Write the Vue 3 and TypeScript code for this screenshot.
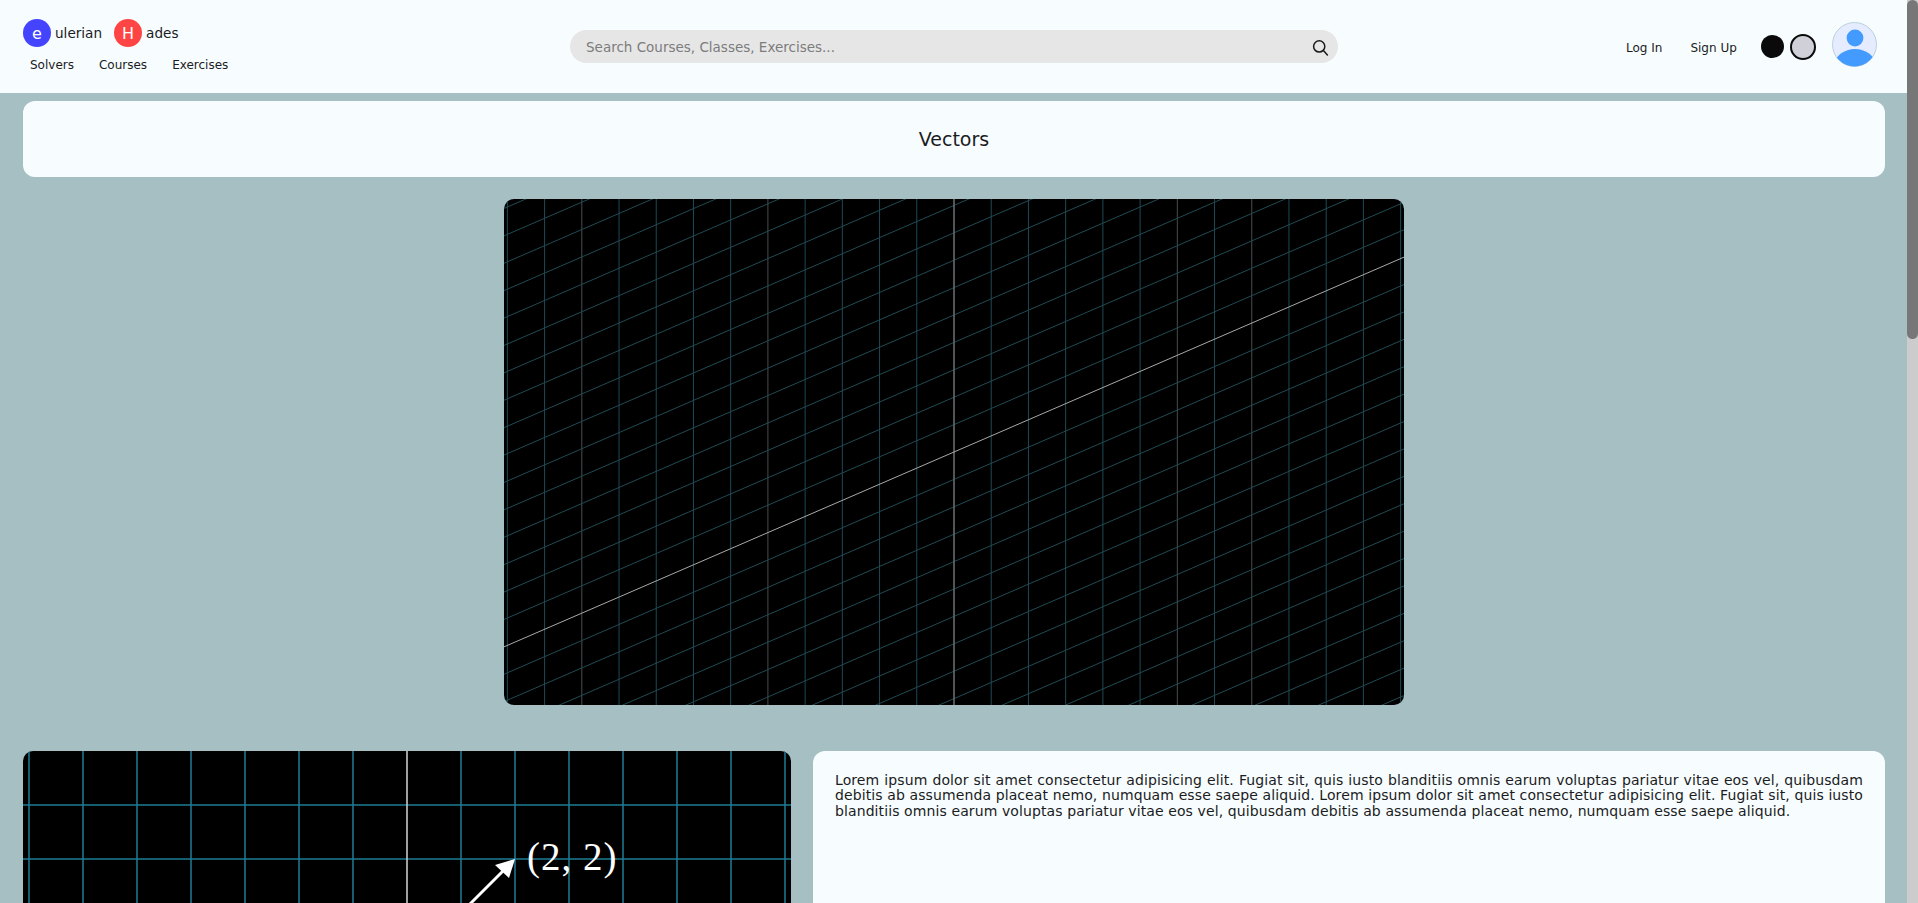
<script setup lang="ts">
const W = 900
const H = 506
const cx = W / 2
const cy = H / 2
const unit = 37.22
const rise = 0.433
const shift = 27.4

const dimmed = [-10, -5, 6, 8]
const wideVerticals: { x: number; color: string }[] = []
for (let i = -13; i <= 13; i++) {
  if (i !== 0) {
    wideVerticals.push({ x: cx + i * unit, color: dimmed.includes(i) ? '#474d50' : '#1d4a56' })
  }
}
const wideSlants: number[] = []
for (let i = -25; i <= 25; i++) if (i !== 0) wideSlants.push(i * shift)

const flatX: number[] = []
for (let i = -7; i <= 7; i++) if (i !== 0) flatX.push(384 + i * 54)
const flatY: number[] = []
for (let i = -3; i <= 3; i++) if (i !== 0) flatY.push(216 + i * 54)

const navLinks = ['Solvers', 'Courses', 'Exercises']
const lorem =
  'Lorem ipsum dolor sit amet consectetur adipisicing elit. Fugiat sit, quis iusto blanditiis omnis earum voluptas pariatur vitae eos vel, quibusdam debitis ab assumenda placeat nemo, numquam esse saepe aliquid. Lorem ipsum dolor sit amet consectetur adipisicing elit. Fugiat sit, quis iusto blanditiis omnis earum voluptas pariatur vitae eos vel, quibusdam debitis ab assumenda placeat nemo, numquam esse saepe aliquid.'
</script>

<template>
  <div class="page">
    <header class="topbar">
      <div class="brand-col">
        <div class="brand">
          <span class="badge blue">e</span><span class="word">ulerian</span>
          <span class="badge red">H</span><span class="word">ades</span>
        </div>
        <nav class="nav">
          <a v-for="l in navLinks" :key="l">{{ l }}</a>
        </nav>
      </div>
      <div class="search">
        <span class="placeholder">Search Courses, Classes, Exercises...</span>
        <svg width="18" height="18" viewBox="0 0 18 18" fill="none" stroke="#1a1a1a" stroke-width="1.5">
          <circle cx="7.2" cy="8.4" r="5.6" />
          <path d="M11.4 12.6 L15.4 17" stroke-linecap="round" />
        </svg>
      </div>
      <div class="right">
        <a class="auth login">Log In</a>
        <a class="auth signup">Sign Up</a>
        <span class="dot dark"></span>
        <span class="dot light"></span>
        <svg class="avatar" width="45" height="45" viewBox="0 0 45 45">
          <defs>
            <clipPath id="av"><circle cx="22.5" cy="22.5" r="22" /></clipPath>
          </defs>
          <circle cx="22.5" cy="22.5" r="22" fill="#e6ecff" stroke="#b9d0da" stroke-width="1" />
          <g clip-path="url(#av)" fill="#449bff">
            <circle cx="23" cy="16" r="8.4" />
            <ellipse cx="23" cy="42" rx="20" ry="15" />
          </g>
        </svg>
      </div>
    </header>

    <section class="title-card">Vectors</section>

    <div class="wide-wrap">
      <svg class="wide-plot" :viewBox="`0 0 ${W} ${H}`" :width="W" :height="H">
        <rect :width="W" :height="H" fill="#000" />
        <line
          v-for="v in wideVerticals"
          :key="'v' + v.x"
          :x1="v.x"
          :x2="v.x"
          y1="0"
          :y2="H"
          :stroke="v.color"
          stroke-width="1"
        />
        <line
          v-for="s in wideSlants"
          :key="'s' + s"
          x1="0"
          :y1="cy + cx * rise + s"
          :x2="W"
          :y2="cy - cx * rise + s"
          stroke="#214b53"
          stroke-width="1"
        />
        <line :x1="cx" :x2="cx" y1="0" :y2="H" stroke="#666b6e" stroke-width="1.6" />
        <line x1="0" :y1="cy + cx * rise" :x2="W" :y2="cy - cx * rise" stroke="#a9a9a9" stroke-width="1" />
      </svg>
    </div>

    <div class="lower">
      <svg class="flat-plot" viewBox="0 0 768 432" width="768" height="432">
        <rect width="768" height="432" fill="#000" />
        <line v-for="x in flatX" :key="'fx' + x" :x1="x" :x2="x" y1="0" y2="432" stroke="#1f7d96" stroke-width="1.5" />
        <line v-for="y in flatY" :key="'fy' + y" x1="0" x2="768" :y1="y" :y2="y" stroke="#1f7d96" stroke-width="1.5" />
        <line x1="384" x2="384" y1="0" y2="432" stroke="#c8c8c8" stroke-width="1.6" />
        <line x1="0" x2="768" y1="216" y2="216" stroke="#c8c8c8" stroke-width="1.6" />
        <line x1="384" y1="216" x2="480" y2="120" stroke="#fff" stroke-width="3" />
        <polygon points="492,108 472,114 486,127" fill="#fff" />
        <text x="504" y="119" class="coord">(2, 2)</text>
      </svg>
      <article class="text-card">
        <p>{{ lorem }}</p>
      </article>
    </div>

    <div class="scroll-track"><div class="scroll-thumb"></div></div>
  </div>
</template>

<style scoped>
.page {
  background: #a5bfc3;
  color: #1b1b22;
  font-family: "DejaVu Sans", sans-serif;
  min-height: 2405px;
  padding-right: 11px;
  box-sizing: border-box;
}
.topbar {
  height: 93px;
  background: #f7fdff;
  display: flex;
  align-items: flex-start;
}
.brand-col {
  width: 570px;
  padding: 19px 0 0 23px;
  flex: none;
  box-sizing: border-box;
}
.brand {
  display: flex;
  align-items: center;
  height: 28px;
  font-size: 13.6px;
}
.badge {
  width: 28px;
  height: 28px;
  border-radius: 50%;
  color: #fff;
  display: flex;
  align-items: center;
  justify-content: center;
  font-size: 16px;
  flex: none;
}
.blue { background: #4444ff; }
.red { background: #ff4444; margin-left: 12px; }
.word { margin-left: 4px; }
.nav {
  display: flex;
  gap: 25px;
  margin: 10px 0 0 7px;
  font-size: 12px;
  line-height: 16px;
}
.search {
  width: 768px;
  height: 33px;
  margin-top: 30px;
  background: #e6e6e6;
  border-radius: 17px;
  display: flex;
  align-items: center;
  justify-content: space-between;
  padding: 0 8px 0 16px;
  box-sizing: border-box;
  flex: none;
}
.placeholder {
  font-size: 13.5px;
  color: #7c7c7c;
}
.right {
  display: flex;
  align-items: center;
  margin-left: 288px;
  height: 93px;
  font-size: 12px;
}
.auth { margin-top: 3px; }
.signup { margin-left: 28px; }
.dot {
  width: 23px;
  height: 23px;
  border-radius: 50%;
  box-sizing: border-box;
}
.dark { background: #0a0a0a; margin-left: 24px; }
.light {
  background: #cfd0d8;
  border: 2px solid #0a0a0a;
  width: 26px;
  height: 26px;
  margin-left: 6px;
}
.avatar { margin-left: 16px; margin-top: -4px; }
.title-card {
  margin: 8px 22px 0 23px;
  height: 76px;
  background: #f7fdff;
  border-radius: 12px;
  display: flex;
  align-items: center;
  justify-content: center;
  font-size: 19px;
}
.wide-wrap {
  display: flex;
  justify-content: center;
  margin: 22px 22px 0 23px;
}
.wide-plot {
  display: block;
  border-radius: 10px;
}
.lower {
  display: flex;
  align-items: flex-start;
  gap: 22px;
  margin: 46px 22px 0 23px;
}
.flat-plot {
  display: block;
  border-radius: 10px;
  flex: none;
}
.coord {
  font-family: "Liberation Serif", serif;
  font-size: 39px;
  letter-spacing: 1px;
  fill: #fff;
}
.text-card {
  flex: 1;
  min-height: 432px;
  background: #f7fdff;
  border-radius: 12px;
  padding: 22px;
  box-sizing: border-box;
}
.text-card p {
  margin: 0;
  font-size: 14px;
  letter-spacing: 0.1px;
  line-height: 15.3px;
  text-align: justify;
}
.scroll-track {
  position: fixed;
  top: 0;
  right: 0;
  bottom: 0;
  width: 11px;
  background: #cccccc;
}
.scroll-thumb {
  height: 339px;
  background: #777777;
  border-radius: 6px;
}
</style>

<style>
html, body { margin: 0; }
</style>
